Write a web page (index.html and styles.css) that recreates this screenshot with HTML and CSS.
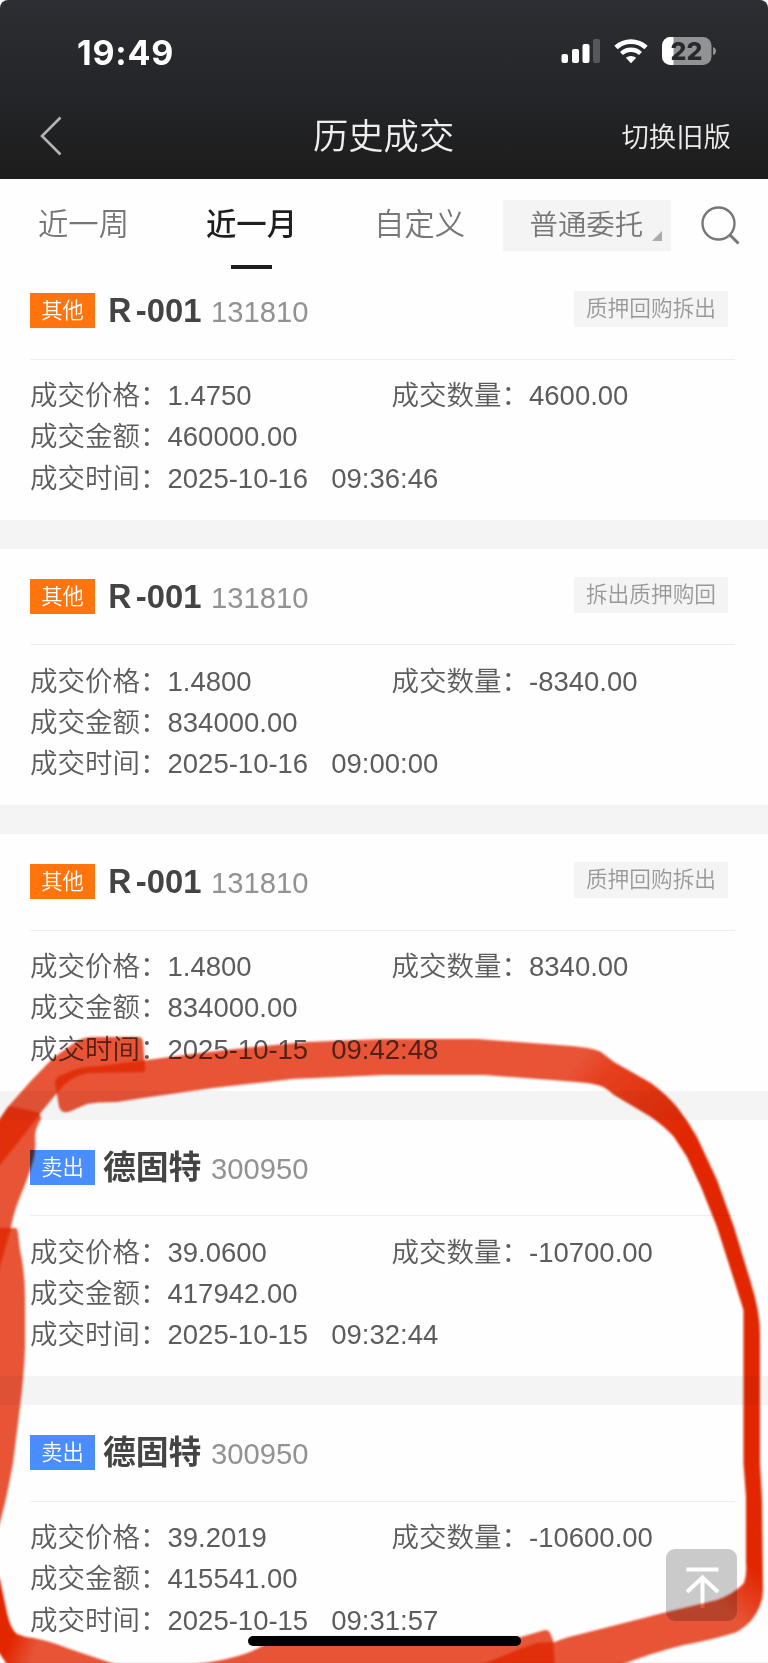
FILE: index.html
```html
<!DOCTYPE html>
<html lang="zh-CN">
<head>
    <meta charset="UTF-8">
    <title>历史成交</title>
    <link rel="stylesheet" href="styles.css">
</head>
<body>
    <header>
        <div class="status-bar">
            <span class="clock">19:49</span>
            <svg class="status-icons" width="156" height="30" viewBox="0 0 156 30">
                <g fill="#fff">
                    <rect x="1.5" y="18" width="6.5" height="9" rx="2"/>
                    <rect x="12" y="13" width="7" height="14" rx="2"/>
                    <rect x="22.5" y="8" width="7" height="19" rx="2"/>
                    <rect x="33" y="3" width="7" height="24" rx="2" fill="#57585c"/>
                </g>
                <g fill="none" stroke="#fff">
                    <path d="M56 11.500 A22 22 0 0 1 86 11.500" stroke-width="4.800"/>
                    <path d="M61.500 17.500 A14 14 0 0 1 80.500 17.500" stroke-width="4.400"/>
                </g>
                <path d="M65.800 21.800 A8 8 0 0 1 76.200 21.800 L71 27.200 Z" fill="#fff"/>
                <rect x="102" y="1" width="49.500" height="28" rx="8.500" fill="#929395"/>
                <path d="M113.500 1 H110.500 A8.500 8.500 0 0 0 102 9.500 V20.500 A8.500 8.500 0 0 0 110.500 29 H113.500 Z" fill="#fff"/>
                <path d="M153 11 Q156 12 156 15 Q156 18 153 19 Z" fill="#929395"/>
                <text class="battery-text" x="126.500" y="24" text-anchor="middle">22</text>
            </svg>
        </div>
        <div class="title-bar">
            <svg class="back" width="24" height="42" viewBox="0 0 24 42">
                <path d="M21.500 2.500 L3 21 L21.500 39.500" fill="none" stroke="#b4b4b4" stroke-width="2.600"/>
            </svg>
            <h1>历史成交</h1>
            <a class="switch">切换旧版</a>
        </div>
    </header>

    <nav>
        <a class="tab">近一周</a>
        <a class="tab active">近一月</a>
        <a class="tab">自定义</a>
        <div class="select">普通委托</div>
        <svg class="search" width="42" height="42" viewBox="0 0 42 42">
            <g fill="none" stroke="#777" stroke-width="2.400">
                <circle cx="18.500" cy="18.500" r="16"/>
                <path d="M29.500 29.500 L38.500 38.500" stroke-width="3"/>
            </g>
        </svg>
    </nav>

    <main>
        <section class="card">
            <div class="card-head">
                <span class="tag other">其他</span>
                <span class="name">Ｒ-001</span>
                <span class="code">131810</span>
                <span class="kind">质押回购拆出</span>
            </div>
            <div class="detail">
                <div class="wide"><span>成交价格：1.4750</span><span>成交数量：4600.00</span></div>
                <div>成交金额：460000.00</div>
                <div>成交时间：2025-10-16<span class="time">09:36:46</span></div>
            </div>
        </section>
        <section class="card">
            <div class="card-head">
                <span class="tag other">其他</span>
                <span class="name">Ｒ-001</span>
                <span class="code">131810</span>
                <span class="kind">拆出质押购回</span>
            </div>
            <div class="detail">
                <div class="wide"><span>成交价格：1.4800</span><span>成交数量：-8340.00</span></div>
                <div>成交金额：834000.00</div>
                <div>成交时间：2025-10-16<span class="time">09:00:00</span></div>
            </div>
        </section>
        <section class="card">
            <div class="card-head">
                <span class="tag other">其他</span>
                <span class="name">Ｒ-001</span>
                <span class="code">131810</span>
                <span class="kind">质押回购拆出</span>
            </div>
            <div class="detail">
                <div class="wide"><span>成交价格：1.4800</span><span>成交数量：8340.00</span></div>
                <div>成交金额：834000.00</div>
                <div>成交时间：2025-10-15<span class="time">09:42:48</span></div>
            </div>
        </section>
        <section class="card">
            <div class="card-head">
                <span class="tag sell">卖出</span>
                <span class="name">德固特</span>
                <span class="code">300950</span>
            </div>
            <div class="detail">
                <div class="wide"><span>成交价格：39.0600</span><span>成交数量：-10700.00</span></div>
                <div>成交金额：417942.00</div>
                <div>成交时间：2025-10-15<span class="time">09:32:44</span></div>
            </div>
        </section>
        <section class="card">
            <div class="card-head">
                <span class="tag sell">卖出</span>
                <span class="name">德固特</span>
                <span class="code">300950</span>
            </div>
            <div class="detail">
                <div class="wide"><span>成交价格：39.2019</span><span>成交数量：-10600.00</span></div>
                <div>成交金额：415541.00</div>
                <div>成交时间：2025-10-15<span class="time">09:31:57</span></div>
            </div>
        </section>
    </main>

    <div class="to-top">
        <svg width="72" height="72" viewBox="0 0 72 72">
            <path d="M20.500 20.500 H52.500 M36.500 59 V28 M21 43 L36.500 28.500 L52 43" fill="none" stroke="#fff" stroke-width="4"/>
        </svg>
    </div>
    <div class="home-bar"></div>

    <!-- red marker drawn round the last two trades -->
    <svg class="marker" width="768" height="1663" viewBox="0 0 768 1663">
        <defs>
            <linearGradient id="fadeTop" gradientUnits="userSpaceOnUse" x1="590" y1="1050" x2="690" y2="1140">
                <stop offset="0" stop-color="#e22600" stop-opacity=".79"/>
                <stop offset=".2" stop-color="#e22600" stop-opacity=".88"/>
                <stop offset="1" stop-color="#e22600"/>
            </linearGradient>
            <linearGradient id="fadeEnd" gradientUnits="userSpaceOnUse" x1="757" y1="1570" x2="724" y2="1608">
                <stop offset="0" stop-color="#e22600"/>
                <stop offset="1" stop-color="#e22600" stop-opacity=".79"/>
            </linearGradient>
            <linearGradient id="fadeLeft" gradientUnits="userSpaceOnUse" x1="8" y1="1645" x2="34" y2="1654">
                <stop offset="0" stop-color="#e22600"/>
                <stop offset="1" stop-color="#e22600" stop-opacity=".79"/>
            </linearGradient>
        </defs>
        <g class="ink">
            <path fill="url(#fadeTop)" d="M55 1082 Q56 1076 65 1074 Q76 1067 100 1066 L147 1060 L200 1053 L253 1047 L307 1042 L384 1039 L477 1039 L571 1046 Q594 1048 601 1052 L614 1062 L651 1083 Q666 1094 677 1107 Q688 1121 697 1137 L717 1180 L734 1227 L751 1283 Q760 1312 760 1333 V1450 H743.500 V1310 L734 1280 L717 1227 L701 1187 L687 1157 L674 1137 Q665 1127 651 1117 L614 1095 Q606 1088 601 1086 Q592 1083 577 1082 L484 1075 H384 L293 1079 L213 1088 L143 1098 L117 1102 Q96 1102 87 1104 L71 1111 Q62 1115 59 1107 Z"/>
            <path fill="url(#fadeEnd)" d="M743.500 1450 H760 V1463 L762 1500 L763 1590 Q763 1606 751 1621 Q744 1628 737 1632 Q716 1639 684 1645 Q654 1652 618 1666 H478 L517 1650 L537 1643 L555 1642 Q564 1638 577 1635 L624 1623 L667 1612 L717 1600 Q734 1594 744 1583 Q747 1575 746 1563 V1497 L743.500 1463 Z"/>
            <path class="soft" d="M139 1037 H93 Q84 1037 77 1041 L53 1058 L30 1082 L7 1108 L-4 1125 V1170 L20 1140 L43 1110 L62 1087 Q74 1075 88 1073 L143 1072 Q146 1072 145 1066 L143 1042 Q142 1037 139 1037 Z"/>
            <path class="soft" d="M9 1106 L37 1112 Q41 1114 41 1119 Q36 1127 35 1135 Q36 1148 34 1157 Q30 1173 20 1197 Q13 1214 10 1232 L-4 1280 V1124 Z"/>
            <path class="soft" d="M-4 1228 H16 Q17 1228 18 1233 L20 1250 Q25 1272 25 1297 V1347 Q24 1376 20 1407 L13 1463 Q8 1490 5 1503 L-4 1538 Z"/>
            <path fill="url(#fadeLeft)" d="M-4 1570 L0 1580 L7 1613 Q11 1630 17 1634 Q24 1637 33 1638 Q50 1641 67 1648 Q90 1656 121 1666 H8 L-4 1648 Z"/>
            <path class="soft" d="M180 1666 Q240 1660 262 1646 L275 1637 H521 L545 1630 Q549 1630 550 1633 L553 1640 L555 1666 Z"/>
        </g>
    </svg>
</body>
</html>
```
FILE: styles.css
```css
* {
    box-sizing: border-box;
}

body {
    position: relative;
    width: 768px;
    height: 1663px;
    margin: 0;
    overflow: hidden;
    background-color: #fefefe;
    color: #5c5c5c;
    font-family: "Liberation Sans", "Noto Sans CJK SC", sans-serif;
    font-weight: 350;
}

header {
    height: 179px;
    background: linear-gradient(#2d2e33, #242528 55%, #1c1c1c);
    border-radius: 8px 8px 0 0;
    color: #eee;
}

.status-bar {
    display: flex;
    justify-content: space-between;
    align-items: center;
    height: 102px;
    padding: 0 52px 0 77px;
}

.clock {
    padding-top: 2px;
    font-family: Inter, sans-serif;
    font-size: 34px;
    font-weight: 700;
    letter-spacing: 0.8px;
    color: #fff;
}

.battery-text {
    font-family: Inter, sans-serif;
    font-size: 25px;
    font-weight: 800;
    fill: #28292d;
}

.title-bar {
    display: grid;
    grid-template-columns: 1fr 144px 1fr;
    align-items: center;
    height: 68px;
    padding: 0 37px 0 39px;
}

h1 {
    margin: 0;
    padding-bottom: 6px;
    font-size: 35.3px;
    font-weight: 350;
    white-space: nowrap;
}

.switch {
    justify-self: end;
    padding-bottom: 3px;
    font-size: 27.4px;
}

nav {
    display: flex;
    height: 84px;
    padding-left: 38px;
}

.tab {
    display: flex;
    flex-direction: column;
    align-items: center;
    width: 91px;
    margin-right: 77px;
    padding-top: 22.5px;
    font-size: 30.4px;
    line-height: 44px;
    color: #777;
    white-space: nowrap;
}

.tab.active {
    color: #1e1e1e;
    font-weight: 500;
}

.tab.active::after {
    content: "";
    flex-shrink: 0;
    width: 41px;
    height: 4px;
    margin-top: 19.5px;
    background-color: #1e1e1e;
}

.tab:nth-child(3) {
    margin-right: 38px;
}

.select {
    position: relative;
    width: 167.5px;
    height: 51px;
    margin-top: 21px;
    padding-left: 26.5px;
    background-color: #f4f4f4;
    color: #777;
    font-size: 28.4px;
    line-height: 51px;
}

.select::after {
    content: "";
    position: absolute;
    right: 9px;
    bottom: 10px;
    border-left: 10px solid transparent;
    border-bottom: 10px solid #aaa;
}

.search {
    margin: 25.5px 0 0 29px;
}

.card {
    height: 285.5px;
    padding: 30px 33px 0 30px;
    border-bottom: 29.5px solid #f4f4f4;
}

.card-head {
    display: flex;
    align-items: flex-start;
    height: 66.5px;
    border-bottom: 1px solid #eee;
}

.tag {
    width: 65px;
    height: 35px;
    color: #fff;
    font-size: 21.3px;
    line-height: 36px;
    text-align: center;
}

.other {
    background-color: #ff740d;
}

.sell {
    background-color: #498dff;
}

.name {
    width: 108px;
    margin-left: 8px;
    color: #444;
    font-size: 32.8px;
    font-weight: 700;
    line-height: 36px;
}

.code {
    color: #929292;
    font-size: 29.2px;
    line-height: 38px;
}

.kind {
    width: 154px;
    height: 36px;
    margin: -2px 7px 0 auto;
    background-color: #f4f4f4;
    color: #999;
    font-size: 21.7px;
    line-height: 36px;
    text-align: center;
}

.detail {
    padding-top: 15.5px;
    font-size: 27.5px;
    line-height: 41.3px;
}

.wide {
    display: grid;
    grid-template-columns: 361.5px 1fr;
}

.time {
    margin-left: 23px;
}

.to-top {
    position: absolute;
    left: 665.5px;
    top: 1549px;
    width: 71.5px;
    height: 72px;
    background-color: #cacaca;
    border-radius: 9px;
}

.home-bar {
    position: absolute;
    left: 248px;
    top: 1636px;
    width: 273px;
    height: 10px;
    background-color: #000;
    border-radius: 5px;
}

.marker {
    position: absolute;
    left: 0;
    top: 0;
    mix-blend-mode: multiply;
}

.ink {
    filter: blur(0.8px);
}

.soft {
    fill: #e22600;
    fill-opacity: .79;
}
```
